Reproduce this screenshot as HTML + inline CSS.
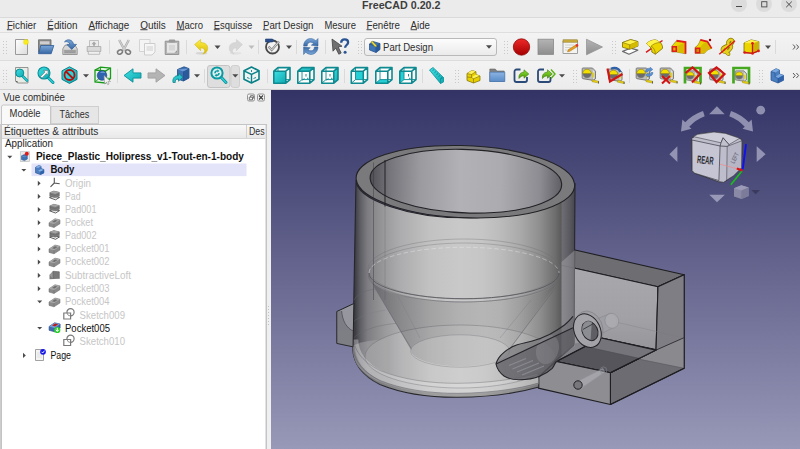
<!DOCTYPE html>
<html><head><meta charset="utf-8"><title>FreeCAD 0.20.2</title>
<style>
*{margin:0;padding:0}
html,body{width:800px;height:449px;overflow:hidden;background:#efefef}
svg{display:block;position:absolute;left:0;top:0}
text{font-family:"Liberation Sans",sans-serif;}
</style></head><body>
<svg width="800" height="449" viewBox="0 0 800 449">
<defs>
<linearGradient id="bgv" x1="0" y1="0" x2="0" y2="1"><stop offset="0" stop-color="#333366"/><stop offset="1" stop-color="#9898b8"/></linearGradient>
<linearGradient id="tbg" x1="0" y1="0" x2="0" y2="1"><stop offset="0" stop-color="#f3f3f3"/><stop offset="1" stop-color="#ececec"/></linearGradient>
<linearGradient id="hdr" x1="0" y1="0" x2="0" y2="1"><stop offset="0" stop-color="#f8f8f8"/><stop offset="1" stop-color="#e8e8e8"/></linearGradient>
<linearGradient id="combo" x1="0" y1="0" x2="0" y2="1"><stop offset="0" stop-color="#fdfdfd"/><stop offset="1" stop-color="#eaeaea"/></linearGradient>
<g id="grip" fill="#c9c9c9"><rect x="0" y="0" width="1" height="1"/><rect x="3" y="0" width="1" height="1"/><rect x="0" y="3" width="1" height="1"/><rect x="3" y="3" width="1" height="1"/><rect x="0" y="6" width="1" height="1"/><rect x="3" y="6" width="1" height="1"/><rect x="0" y="9" width="1" height="1"/><rect x="3" y="9" width="1" height="1"/><rect x="0" y="12" width="1" height="1"/><rect x="3" y="12" width="1" height="1"/></g>
<path id="dd" d="M0 0h6l-3 3.4z" fill="#4a4a4a"/>
</defs>
<!-- title bar -->
<rect x="0" y="0" width="800" height="17" fill="#ebebeb"/>
<rect x="0" y="17" width="800" height="1" fill="#dadada"/>
<text x="362" y="8.7" font-size="10.5" font-weight="bold" fill="#3d3d3d" textLength="78.5" lengthAdjust="spacingAndGlyphs">FreeCAD 0.20.2</text>
<circle cx="739" cy="4" r="8" fill="#dcdcdc"/><circle cx="764" cy="4" r="8" fill="#dcdcdc"/><circle cx="789" cy="4" r="8" fill="#dcdcdc"/>
<rect x="736" y="6" width="6" height="1" fill="#4a4a4a"/>
<rect x="761.7" y="1.7" width="5.2" height="5.2" fill="none" stroke="#4a4a4a" stroke-width="0.9"/>
<path d="M786.2 1.6l5.6 5.6M791.8 1.6l-5.6 5.6" stroke="#4a4a4a" stroke-width="1" fill="none"/>
<!-- menubar -->
<rect x="0" y="18" width="800" height="14" fill="#f1f1f1"/>
<rect x="0" y="32" width="800" height="1" fill="#dedede"/>
<g font-size="10.400" fill="#2e2e2e">
<text x="6.9" y="28.5" textLength="29.4" lengthAdjust="spacingAndGlyphs">Fichier</text>
<text x="47.3" y="28.5" textLength="30.2" lengthAdjust="spacingAndGlyphs">Édition</text>
<text x="88.5" y="28.5" textLength="40.8" lengthAdjust="spacingAndGlyphs">Affichage</text>
<text x="140.3" y="28.5" textLength="25.5" lengthAdjust="spacingAndGlyphs">Outils</text>
<text x="176.5" y="28.5" textLength="26.5" lengthAdjust="spacingAndGlyphs">Macro</text>
<text x="213.8" y="28.5" textLength="38.4" lengthAdjust="spacingAndGlyphs">Esquisse</text>
<text x="263" y="28.5" textLength="50.4" lengthAdjust="spacingAndGlyphs">Part Design</text>
<text x="324.5" y="28.5" textLength="31.5" lengthAdjust="spacingAndGlyphs">Mesure</text>
<text x="366.5" y="28.5" textLength="33.5" lengthAdjust="spacingAndGlyphs">Fenêtre</text>
<text x="410.6" y="28.5" textLength="19.4" lengthAdjust="spacingAndGlyphs">Aide</text>
</g>
<g fill="#2e2e2e"><rect x="6.9" y="29.300" width="5.4" height="0.900"/><rect x="47.3" y="29.300" width="5.8" height="0.900"/><rect x="88.5" y="29.300" width="6.4" height="0.900"/><rect x="140.3" y="29.300" width="7.2" height="0.900"/><rect x="176.5" y="29.300" width="8" height="0.900"/><rect x="213.8" y="29.300" width="5.8" height="0.900"/><rect x="263" y="29.300" width="5.6" height="0.900"/><rect x="366.5" y="29.300" width="5.4" height="0.900"/><rect x="410.6" y="29.300" width="6.4" height="0.900"/></g>
<!-- toolbars -->
<rect x="0" y="33" width="800" height="28" fill="url(#tbg)"/>
<rect x="0" y="60" width="800" height="1" fill="#dcdcdc"/>
<rect x="0" y="61" width="800" height="28" fill="url(#tbg)"/>
<rect x="0" y="89" width="800" height="1" fill="#d0d0d0"/>
<!-- grips tb1 -->
<use href="#grip" x="3" y="41"/><use href="#grip" x="358" y="41"/><use href="#grip" x="504" y="41"/><use href="#grip" x="612" y="41"/>
<!-- grips tb2 -->
<use href="#grip" x="3" y="70"/><use href="#grip" x="455" y="70"/><use href="#grip" x="573" y="70"/><use href="#grip" x="759" y="70"/>
<!-- separators tb1 -->
<g fill="#dadada"><rect x="109" y="40" width="1" height="14"/><rect x="186" y="40" width="1" height="14"/><rect x="258" y="40" width="1" height="14"/><rect x="296" y="40" width="1" height="14"/><rect x="325" y="40" width="1" height="14"/><rect x="775" y="40" width="1" height="14"/>
<rect x="117" y="69" width="1" height="14"/><rect x="204" y="69" width="1" height="14"/><rect x="267" y="69" width="1" height="14"/><rect x="344" y="69" width="1" height="14"/><rect x="422" y="69" width="1" height="14"/><rect x="629" y="69" width="1" height="14"/></g>
<!-- drop arrows -->
<use href="#dd" x="214.5" y="45.5"/><use href="#dd" x="248.5" y="45.5" opacity="0.3"/><use href="#dd" x="286" y="45.5"/><use href="#dd" x="765" y="45.5"/>
<use href="#dd" x="83" y="74.2"/><use href="#dd" x="194" y="74.2"/><use href="#dd" x="559" y="74.2"/>
<!-- chevrons -->
<path d="M793 44.5l2.2 2.5-2.2 2.5M796.4 44.5l2.2 2.5-2.2 2.5" fill="none" stroke="#555" stroke-width="1"/>
<path d="M793 73l2.2 2.5-2.2 2.5M796.4 73l2.2 2.5-2.2 2.5" fill="none" stroke="#555" stroke-width="1"/>
<!-- combobox -->
<rect x="364.5" y="38.5" width="132" height="17" rx="2.5" fill="url(#combo)" stroke="#b9b9b9"/>
<text x="383" y="50.6" font-size="10.400" fill="#2e2e2e" textLength="50" lengthAdjust="spacingAndGlyphs">Part Design</text>
<use href="#dd" x="486" y="45.3"/>
<!-- pressed button -->
<rect x="207.5" y="65.5" width="22.5" height="22" rx="2.5" fill="#dedede" stroke="#c4c4c4"/>
<rect x="231" y="65.5" width="8.5" height="22" rx="2.5" fill="#dedede" stroke="#cfcfcf"/>
<use href="#dd" x="232.3" y="74.2"/>
<!-- ===== toolbar 1 icons ===== -->
<defs>
<linearGradient id="gPage" x1="0" y1="0" x2="1" y2="1"><stop offset="0" stop-color="#ffffff"/><stop offset="1" stop-color="#dcdcdc"/></linearGradient>
<linearGradient id="gBlue" x1="0" y1="0" x2="0" y2="1"><stop offset="0" stop-color="#7aa6d8"/><stop offset="1" stop-color="#3768a5"/></linearGradient>
<linearGradient id="gYel" x1="0" y1="0" x2="0" y2="1"><stop offset="0" stop-color="#fff04a"/><stop offset="1" stop-color="#d8b800"/></linearGradient>
<linearGradient id="gRed" x1="0" y1="0" x2="0" y2="1"><stop offset="0" stop-color="#ef2929"/><stop offset="1" stop-color="#a40000"/></linearGradient>
<linearGradient id="gGray" x1="0" y1="0" x2="0" y2="1"><stop offset="0" stop-color="#b4b4b4"/><stop offset="1" stop-color="#8e8e8e"/></linearGradient>
<radialGradient id="gStar"><stop offset="0" stop-color="#ffffc0"/><stop offset="0.5" stop-color="#f4e400"/><stop offset="1" stop-color="#f4e400" stop-opacity="0"/></radialGradient>
</defs>
<!-- new -->
<g transform="translate(14,39)">
<path d="M1.5 0.5h12v15h-12z" fill="url(#gPage)" stroke="#9a9a9a"/>
<circle cx="12" cy="3" r="3.6" fill="url(#gStar)"/><circle cx="12" cy="3" r="1.7" fill="#f6ec20"/>
</g>
<!-- open -->
<g transform="translate(37,39)">
<path d="M1.500 0.800h12.500v12.500h-12.500z" fill="#8e8e8e" stroke="#686868" stroke-width=".8"/>
<path d="M3 2.300h9.500v3h-9.500z" fill="#cfcfcf"/>
<path d="M3.800 6.500h13l-2.600 8.200h-12.700z" fill="url(#gBlue)" stroke="#2f5c96" stroke-width=".8"/>
</g>
<!-- save -->
<g transform="translate(62,39)">
<path d="M0.800 9.800l2.200-3.600h10l2.200 3.600v5.700h-14.400z" fill="#d6d6d6" stroke="#858585" stroke-width=".8"/>
<rect x="1.800" y="10.800" width="12.400" height="3.800" fill="#a6a6a6"/><path d="M3 12h10M3 13.400h10" stroke="#8c8c8c" stroke-width=".5"/>
<path d="M2.500 2.800c3-3.600 8.600-2 9 2.600h3l-4.800 5-4.800-5h2.900c-.3-2-2.500-3.300-5.300-2.600z" fill="url(#gBlue)" stroke="#2f5c96" stroke-width=".7"/>
</g>
<!-- save-as / print (disabled) -->
<g transform="translate(86,39)">
<path d="M3.500 1.500h9v6h-9z" fill="#ececec" stroke="#b4b4b4" stroke-width=".8"/>
<path d="M8 2.600l2.600 2.600h-1.600v1.600h-2v-1.600h-1.600z" fill="#a8a8a8"/>
<path d="M1.200 7.500h13.600v5h-13.600z" fill="#dadada" stroke="#a6a6a6" stroke-width=".8"/>
<path d="M2.300 12.300h11.400v3h-11.400z" fill="#f0f0f0" stroke="#b0b0b0" stroke-width=".8"/>
</g>
<!-- cut -->
<g transform="translate(116,39)" fill="none" stroke="#8b8b8b">
<path d="M3.2 1l5.6 10.5M12.8 1l-5.6 10.500" stroke-width="2.200" stroke="#9e9e9e"/>
<path d="M3.2 1l5.6 10.5M12.8 1l-5.6 10.5" stroke-width="1.300" stroke="#d0d0d0"/>
<ellipse cx="4" cy="13" rx="2.6" ry="2" transform="rotate(-30 4 13)" stroke-width="1.5" stroke="#7d7d7d"/>
<ellipse cx="12" cy="13" rx="2.6" ry="2" transform="rotate(30 12 13)" stroke-width="1.5" stroke="#7d7d7d"/>
</g>
<!-- copy (disabled) -->
<g transform="translate(139,39)">
<path d="M0.500.5h10.500v12h-10.500z" fill="#f4f4f4" stroke="#d4d4d4"/>
<path d="M5.500 4.500h10.500v8.500l-3 3h-7.500z" fill="#f6f6f6" stroke="#cdcdcd"/>
<rect x="7.500" y="7" width="6.500" height="5" fill="#e2e2e2"/>
</g>
<!-- paste -->
<g transform="translate(164,39)">
<path d="M1.200 2.200h13.600v13.300h-13.600z" fill="#b4b4b4" stroke="#8e8e8e" stroke-width=".9"/>
<path d="M3 4h10v9.800h-10z" fill="#e6e6e6"/>
<rect x="4.800" y="0.600" width="6.400" height="3" rx="1" fill="#9a9a9a"/>
<rect x="5" y="6" width="6" height="5.500" fill="#d6d6d6"/>
<path d="M10.500 13.800l2.500-2.500v2.500z" fill="#9a9a9a"/>
</g>
<!-- undo -->
<g transform="translate(194,39)">
<ellipse cx="7.500" cy="14.300" rx="6" ry="1.400" fill="#000" opacity="0.100"/>
<path d="M0.600 5.500l6-5v3c5.500 0 8 3.500 6.800 7.500-0.700 2.200-2.600 3.600-4.600 4 1.800-1.500 2.200-3 1.600-4.300-0.700-1.400-2-1.800-3.800-1.800v2.800z" fill="url(#gYel)" stroke="#d4bc10" stroke-width=".6"/>
</g>
<!-- redo (disabled) -->
<g transform="translate(228,39)" opacity="0.900">
<ellipse cx="7.500" cy="14.300" rx="6" ry="1.400" fill="#000" opacity="0.050"/>
<path d="M14.400 5.500l-6-5v3c-5.500 0-8 3.500-6.800 7.500 0.700 2.200 2.600 3.600 4.600 4-1.800-1.500-2.200-3-1.600-4.300 0.700-1.400 2-1.800 3.800-1.800v2.800z" fill="#d4d4d4" stroke="#cbcbcb" stroke-width=".6"/>
</g>
<!-- macro check -->
<g transform="translate(264,38)">
<circle cx="8.500" cy="9" r="6.500" fill="#f2f2f2" stroke="#4a4a4a" stroke-width="1.800"/>
<path d="M4.500 8.500l3.200 3.500l7.300-8.500" fill="none" stroke="#8a8a8a" stroke-width="2.400"/>
<path d="M4.500 8.500l3.200 3.500l7.300-8.500" fill="none" stroke="#d9d9d9" stroke-width="1"/>
<path d="M1.500 1h7l1.500 1.500-1.500 1.500h-7z" fill="#2b4f8f" stroke="#1d3a70" stroke-width=".6"/>
</g>
<!-- refresh -->
<g transform="translate(303,39)">
<path id="rfA" d="M0.600 7C0.600 2.500 4-.5 7.500-.5C9.500-.5 11.500 .5 12.800 1.800L15-.5V7L8.300 6.200L10.600 4.400C9.800 3.600 8.800 3.200 7.500 3.200C5.500 3.200 4.200 4.800 4.200 7Z" fill="url(#gBlue)" stroke="#2f5c96" stroke-width=".5" stroke-linejoin="round"/>
<use href="#rfA" transform="rotate(180 7.800 7.500)"/>
</g>
<!-- whats this -->
<g transform="translate(331,38)">
<path d="M1 1l10 7.200-3.800 .8 3 6-2.400 1.200-3-6-2.800 3z" fill="#707070" stroke="#444" stroke-width=".8" stroke-linejoin="round"/>
<path d="M10.200 4.800c0-2.200 1.500-3.400 3.500-3.400s3.400 1.200 3.400 3c0 2.600-3 2.600-3 5.300" fill="none" stroke="#2a5592" stroke-width="2.300"/>
<circle cx="14.100" cy="14.300" r="1.500" fill="#2a5592"/>
</g>
<!-- combobox icon -->
<g transform="translate(369,41)">
<path d="M0.500 3l3.500-2.500 7 2v6l-4 3-6.500-2.500z" fill="#3d72b4" stroke="#1f4a87" stroke-width=".7"/>
<path d="M0.500 3l6.500 2.300v6.200M7 5.300l4-2.800" fill="none" stroke="#1f4a87" stroke-width=".7"/>
<path d="M7 5.300l4-2.800v6l-4 3z" fill="#2a5a9c"/>
<path d="M1.800 1l1.500-1 4.200 4.400-.2 1.600-1.500-.4z" fill="#f0dc3a" stroke="#8a7a10" stroke-width=".5"/>
</g>
<!-- record -->
<circle cx="521.500" cy="47" r="8.200" fill="url(#gRed)" stroke="#8f0a0a" stroke-width=".8"/>
<!-- stop -->
<rect x="538" y="39.200" width="15.600" height="15.200" fill="url(#gGray)" stroke="#8a8a8a" stroke-width=".8"/>
<!-- notepad -->
<g transform="translate(562,39)">
<path d="M1 2h14.500v12.500h-14.500z" fill="#f3f3f0" stroke="#9f9f9f"/>
<rect x="1" y="0.800" width="14.500" height="2.400" fill="#c8aa3a" stroke="#8c7420" stroke-width=".5"/>
<path d="M3 6h9M3 8.500h6M3 11h4" stroke="#c9c9c9" stroke-width=".8"/>
<path d="M5.500 12.800l1-2.200 7.500-4.800 1.400 1.800-7.600 4.700z" fill="#e8a020" stroke="#a8680c" stroke-width=".5"/>
<circle cx="15" cy="6.400" r="1.300" fill="#e03030"/>
</g>
<!-- play -->
<path d="M586.500 39.200v15.600l16-7.800z" fill="url(#gGray)" stroke="#8f8f8f" stroke-width=".7"/>
<!-- pad -->
<g transform="translate(622,38)">
<path d="M0.600 13.400l7.800-3.200 7.400 2-8.800 4z" fill="#fdfdfd" stroke="#6a6a6a" stroke-width="1.200" stroke-linejoin="round"/>
<path d="M0.500 4.500l8.100-2.900 7.400 2v4.500l-8.300 3.200-7.200-2z" fill="#e8d000" stroke="#6a5c00" stroke-width=".7" stroke-linejoin="round"/>
<path d="M0.500 4.500l8.100-2.900 7.400 2-8.300 3.200z" fill="#fff24a" stroke="#6a5c00" stroke-width=".5"/>
<path d="M7.700 6.800v4.500l8.300-3.200v-4.500z" fill="#d4ba00"/>
<path d="M7.700 6.800v4.500" stroke="#6a5c00" stroke-width=".5"/>
</g>
<!-- revolution -->
<g transform="translate(645,38)">
<path d="M1 14.450L17.500 2.500" stroke="#d81818" stroke-width="1.500"/>
<path d="M1.600 5.450C4 3 7.500 1.800 10.800 1.850L15.300 4.550C17 6 17.800 8.500 17.500 10.400L10.350 16.250 6.750 14C7.200 11.500 6 9.200 4 8.150Z" fill="#ecd400" stroke="#6a5c00" stroke-width=".7" stroke-linejoin="round"/>
<path d="M1.600 5.450C4 3 7.500 1.800 10.800 1.850L15.300 4.550C11.500 4.500 8.500 5.800 6 8.200L4 8.150Z" fill="#fff24a"/>
<path d="M6 8.200C8.500 5.800 11.500 4.500 15.300 4.550M6 8.200C8.800 9.500 10.400 12.500 10.350 16.250" fill="none" stroke="#6a5c00" stroke-width=".5"/>
</g>
<!-- loft -->
<g transform="translate(671,38)">
<path d="M0.800 8.150L5.500 2.750 14.500 4.100V15.800L5.300 14H0.800Z" fill="#ecd400" stroke="#6a5c00" stroke-width=".5"/>
<path d="M5.300 8.150L14 4.500V15.300L5.300 14Z" fill="#d8bc00"/>
<path d="M5.500 2.750L14.500 4.100V15.800" fill="none" stroke="#e01c1c" stroke-width="1.800" stroke-linejoin="miter"/>
<path d="M1.500 8.850h3.800v4.500h-3.800z" fill="#e8a800" stroke="#e01c1c" stroke-width="1.500"/>
</g>
<!-- sweep -->
<g transform="translate(694,37)">
<path d="M1 10.500C3.600 9 5.400 6.500 6.350 2.850L13.500 4.650 17.600 11.400C14.500 12 12 13.800 10.400 16.350H1Z" fill="#ecd400" stroke="#6a5c00" stroke-width=".5"/>
<path d="M6.350 10.500C7.500 7.500 10 5.500 13.500 4.650L17.600 11.400C14.500 12 12 13.800 10.400 16.350H6.350Z" fill="#d8bc00"/>
<path d="M6.350 2.850L13.500 4.650 17.600 11.400" fill="none" stroke="#e01c1c" stroke-width="1.700" stroke-linejoin="round"/>
<path d="M1.700 11.200h4v4.500h-4z" fill="#c89000" stroke="#e01c1c" stroke-width="1.500"/>
<path d="M8.500 13.500c2-.3 4-1.500 5.500-3.500" fill="none" stroke="#e8a040" stroke-width=".9" opacity=".8"/>
<circle cx="16" cy="3.100" r="1.250" fill="#8a0808"/>
</g>
<!-- helix -->
<g transform="translate(719,38)">
<g fill="none" stroke-linecap="round">
<path d="M9 5.500C9 2.500 11.500 1 13 2.200 14.500 3.500 13 6 10.500 7 7 8.300 3 9 3.500 12 4 14.500 8 14.500 10 12.500 12 10.500 13.500 8 11 7.500 8.500 7.200 6 10 7.500 13.500 8 15 9 16 9.500 16" stroke="#8a7a00" stroke-width="3.800"/>
<path d="M9 5.500C9 2.500 11.500 1 13 2.200 14.500 3.500 13 6 10.500 7 7 8.300 3 9 3.500 12 4 14.500 8 14.500 10 12.500 12 10.500 13.500 8 11 7.500 8.500 7.200 6 10 7.500 13.500 8 15 9 16 9.500 16" stroke="#e4d020" stroke-width="2.400"/>
</g>
<path d="M0.250 16.250L16 2.750" stroke="#dc1818" stroke-width="1.400"/>
</g>
<!-- additive box -->
<g transform="translate(743,38)">
<path d="M1 5L8.200 1.850 15.850 3.650V13.100L9.500 15.350 1 14.500Z" fill="#ecd400" stroke="#6a5c00" stroke-width=".7" stroke-linejoin="round"/>
<path d="M1 5L8.200 1.850 15.850 3.650 9.500 5.200Z" fill="#fff24a"/>
<path d="M9.500 5.200L15.850 3.650V13.100L9.500 15.350Z" fill="#cdb400"/>
<path d="M9.500 5.200V15.350M1.500 14.500L9.500 15.350 15.500 12.900" fill="none" stroke="#cc1616" stroke-width="1.300"/>
<circle cx="9.500" cy="5.200" r="1.300" fill="#dc1818"/><circle cx="1.600" cy="14.500" r="1.300" fill="#dc1818"/><circle cx="9.500" cy="15.500" r="1.300" fill="#dc1818"/><circle cx="15.500" cy="12.900" r="1.300" fill="#dc1818"/>
</g>
<!-- ===== toolbar 2 icons ===== -->
<defs>
<linearGradient id="gCy" x1="0" y1="0" x2="1" y2="1"><stop offset="0" stop-color="#3fe0e4"/><stop offset="1" stop-color="#0fa8b0"/></linearGradient>
<linearGradient id="gFold" x1="0" y1="0" x2="0" y2="1"><stop offset="0" stop-color="#8cb4e2"/><stop offset="1" stop-color="#5a8cc8"/></linearGradient>
<linearGradient id="gGrn" x1="0" y1="0" x2="0" y2="1"><stop offset="0" stop-color="#8ae234"/><stop offset="1" stop-color="#4e9a06"/></linearGradient>
<!-- wireframe cube 17x17 -->
<path id="wbg" d="M0.800 5.200l4.200-3.600h12v12l-4.200 3.600h-12z" fill="#ffffff"/>
<path id="whid" d="M5 1.800v11.800l-4.200 3.600M5 13.600h12" stroke-width="1" stroke="#1a969c" fill="none"/>
<path id="wcube" d="M0.800 5.200h12v12h-12zM0.800 5.200l4.200-3.600h12l-4.200 3.600M17 1.600v12l-4.200 3.600" stroke-width="1.600" fill="none" stroke="#0e8a90" stroke-linejoin="round"/>
<path id="wmarks" d="M7.500 12.500l-2.200 1.600M9 8v2.500M11.500 12.300h-1.600" stroke="#0e7a80" stroke-width=".9" fill="none"/>
<!-- measure tape body -->
<g id="tape">
<path d="M1 1h9.500l3 3.200v7.600l-2.200 1.600-10.300-1.700q-.8-.2-.8-1v-8.900q0-.8.800-.8z" fill="#bdbdbd" stroke="#707070" stroke-width=".9" stroke-linejoin="round"/>
<path d="M10.200 1.600l2.800 3v7l-2.300 1.400z" fill="#e2e2e2" stroke="#8a8a8a" stroke-width=".4"/>
<circle cx="5" cy="6.600" r="4.300" fill="#6c6c6c" stroke="#8e8e8e" stroke-width=".5"/>
<path d="M0.700 6.600a4.300 4.300 0 0 1 8.600 0z" fill="#f2e000" stroke="#8a7a00" stroke-width=".4"/>
<path d="M10.700 5.600h1.500v4.800h-1.500z" fill="#e8d400"/>
</g>
<g id="tapeEnd"><path d="M10 12.800l6.600 1.400v1.900l-6.600-1.400z" fill="#e8d010" stroke="#8a7a00" stroke-width=".4"/><path d="M16.200 14.200l.8 .1v2.300l-.8-.2z" fill="#4a4a4a"/></g>
</defs>
<!-- fit all -->
<g transform="translate(14,67)">
<path d="M1.500 0.500h12.500v15.500h-10.500l-2-2z" fill="#e9ece4" stroke="#8a8a8a" stroke-width=".9"/>
<path d="M1.500 14l2 2v-2z" fill="#555"/>
<path d="M7.500 8l5.500 5.500" stroke="#0a8f98" stroke-width="2.600" stroke-linecap="round"/>
<path d="M7.500 8l5.500 5.500" stroke="#28d0d6" stroke-width="1.200" stroke-linecap="round"/>
<circle cx="5.800" cy="6" r="4" fill="url(#gCy)" stroke="#0a8f98" stroke-width="1"/>
</g>
<!-- fit selection -->
<g transform="translate(37,66)">
<path d="M10 10.500l6 6" stroke="#0a8f98" stroke-width="3" stroke-linecap="round"/>
<path d="M10 10.500l6 6" stroke="#28d0d6" stroke-width="1.400" stroke-linecap="round"/>
<circle cx="7" cy="7" r="6" fill="url(#gCy)" stroke="#0a8f98" stroke-width="1.100"/>
<path d="M3.500 10.500l4.500-4.500-1.500-1.500h4.500v4.500l-1.500-1.500-4.500 4.500z" fill="#f4f4f4" stroke="#5a6a6a" stroke-width=".5"/>
</g>
<!-- draw style -->
<g transform="translate(61,66)">
<path d="M8.500 0.800l7.500 4v8.600l-7.500 4-7.500-4v-8.600z" fill="url(#gCy)" stroke="#0a8088" stroke-width="1"/>
<circle cx="8.500" cy="9" r="5" fill="#2cd4da" stroke="#b01010" stroke-width="1.800"/>
<path d="M5 5.500l7 7" stroke="#b01010" stroke-width="1.800"/>
</g>
<!-- bounding box select -->
<g transform="translate(94,66)">
<path d="M1 4l5.500-2.800 10 .8v10.500l-5 4.500-10.500-1z" fill="#e8f4e8" stroke="#1a9a1a" stroke-width="1.300"/>
<path d="M1 4l10.500 1 5-3M11.500 5v12" fill="none" stroke="#1a9a1a" stroke-width="1.300"/>
<path d="M6.500 1.200v10l-5.500 4.800M6.500 11.200l10 1.300" fill="none" stroke="#1a9a1a" stroke-width=".9"/>
<circle cx="8" cy="9.500" r="4.800" fill="#2f63b0" stroke="#1c417e" stroke-width=".6"/>
<path d="M6 6.500c2-1.600 4.500-1 5.500 .5-2-.6-4 0-5.500-.5z" fill="#7aa6e0"/>
<path d="M10 9.500l6.500 6-2.600 .2 1.200 2.300-1.400 .7-1.200-2.400-1.900 1.700z" fill="#f4f4f4" stroke="#8a8a8a" stroke-width=".6"/>
</g>
<!-- back -->
<path d="M124 75.500l9-6.700v4.100h8v5.200h-8v4.100z" fill="url(#gCy)" stroke="#0a8f98" stroke-width=".9"/>
<!-- forward -->
<path d="M165 75.500l-9-6.700v4.100h-8v5.200h8v4.100z" fill="#b4b4b4" stroke="#a0a0a0" stroke-width=".9"/>
<!-- link go -->
<g transform="translate(172,66)">
<path d="M5.500 3.500l6.500-2.700 5 1.800v9.400l-5.500 3-6-2z" fill="#3d72b4" stroke="#1f4a87" stroke-width=".8"/>
<path d="M5.500 3.500l6 2 5.500-2.900z" fill="#6c9ad4"/>
<path d="M11.500 5.500v9.500" stroke="#1f4a87" stroke-width=".8"/>
<path d="M11.500 5.500l5.500-2.900v9.400l-5.500 3z" fill="#2a5a9c"/>
<path d="M1 16.500c-.8-4 1.600-7 5.500-7v-2.300l4.300 4-4.300 4v-2.300c-2.300 0-3.700 1.300-3.200 3.600z" fill="#28c4cc" stroke="#0a7a82" stroke-width=".7"/>
</g>
<!-- sync view (pressed) -->
<g transform="translate(210,66)">
<path d="M10.500 10.500l5.500 6" stroke="#0a8f98" stroke-width="3" stroke-linecap="round"/>
<path d="M10.500 10.500l5.500 6" stroke="#28d0d6" stroke-width="1.400" stroke-linecap="round"/>
<circle cx="7" cy="7" r="5.600" fill="#dff0f0" stroke="#0a9aa2" stroke-width="2"/>
<path d="M4.200 7.200c0-2 1.500-3.200 3.200-3l0-.9 2 1.600-2 1.600v-.9c-.9 0-1.600.6-1.600 1.600zM9.800 7c0 2-1.500 3.200-3.200 3l0 .9-2-1.600 2-1.600v.9c.9 0 1.600-.6 1.600-1.600z" fill="#0a9aa2"/>
</g>
<!-- iso -->
<g transform="translate(243,66)">
<path d="M8.500 1l7.500 3.800v8.400l-7.500 3.800-7.500-3.800v-8.400z" fill="#eef4f4" stroke="#0a8088" stroke-width="1.600" stroke-linejoin="round"/>
<path d="M1 4.800l7.500 3.700 7.500-3.700M8.500 8.500v8.500" fill="none" stroke="#0a8088" stroke-width="1.400"/>
<path d="M4 11.500l2.500 1M13 11.500l-2.500 1M8.500 4v2" stroke="#0a8088" stroke-width=".9"/>
</g>
<!-- front -->
<g transform="translate(273,66)"><use href="#wbg"/><use href="#whid"/><path d="M0.800 5.200h12v12h-12z" fill="url(#gCy)"/><use href="#wcube"/></g>
<!-- top -->
<g transform="translate(297,66)"><use href="#wbg"/><use href="#whid"/><path d="M0.800 5.200l4.200-3.600h12l-4.200 3.600z" fill="url(#gCy)"/><use href="#wcube"/><use href="#wmarks"/></g>
<!-- right -->
<g transform="translate(321,66)"><use href="#wbg"/><use href="#whid"/><path d="M12.800 5.200l4.200-3.600v12l-4.200 3.600z" fill="url(#gCy)"/><use href="#wcube"/><use href="#wmarks"/></g>
<!-- rear -->
<g transform="translate(350.500,66)"><use href="#wbg"/><path d="M5 5.200h7.800v8.400h-7.800z" fill="#24d0d6"/><use href="#whid"/><use href="#wcube"/></g>
<!-- bottom -->
<g transform="translate(375,66)"><use href="#wbg"/><path d="M0.800 17.200l4.200-3.600h7.800v3.600z" fill="#24d0d6"/><use href="#whid"/><use href="#wcube"/></g>
<!-- left -->
<g transform="translate(399,66)"><use href="#wbg"/><path d="M0.800 5.200h4.200v8.400l-4.200 3.600z" fill="#24d0d6"/><use href="#whid"/><use href="#wcube"/><path d="M9.500 8v2.500M11.500 12.300h-1.600" stroke="#0e7a80" stroke-width=".9" fill="none"/></g>
<!-- ruler -->
<g transform="translate(428.500,67)">
<path d="M1 3l3.500-2.500 10.500 10v4.500l-3 1.500z" fill="url(#gCy)" stroke="#0a8f98" stroke-width=".8"/>
<path d="M12 16.500v-4.500l3-1.500" fill="none" stroke="#0a8f98" stroke-width=".7"/>
<path d="M4 3.500l1.500-1M6 5.500l1.500-1M8 7.500l1.500-1M10 9.500l1.500-1M12 11.500l1.500-1" stroke="#0a6a72" stroke-width=".6"/>
</g>
<!-- part (std part yellow) -->
<g transform="translate(466,68)">
<path d="M1 5.500l5-3 4 1.200v2.800l4 1.500v4.500l-6.500 2.500-6.500-2.500z" fill="#e8d000" stroke="#7a6a00" stroke-width=".7"/>
<path d="M1 5.500l5-3 4 1.200-4.500 2.800zM5.500 9.500l4.500-3 4 1.500-6.500 3z" fill="#fff25a"/>
<path d="M1 5.500l4.500 1v3l2 1.200v4.300M5.500 6.500l4.500-2.800M7.500 10.800l6.500-2.800M1 9l4.500 .5" fill="none" stroke="#7a6a00" stroke-width=".6"/>
</g>
<!-- group folder -->
<g transform="translate(489,68)">
<path d="M0.800 1h5.500l1.500 2h7.400v10.500h-14.400z" fill="#808080" stroke="#666" stroke-width=".6"/>
<path d="M0.800 4.200h15v9.300h-15z" fill="url(#gFold)" stroke="#4a78b4" stroke-width=".7"/>
</g>
<!-- link make -->
<g transform="translate(513.500,68)">
<path d="M7 1.500h-4a2 2 0 0 0-2 2v8.500a2 2 0 0 0 2 2h8.500a2 2 0 0 0 2-2v-3" fill="none" stroke="#2b4a78" stroke-width="1.800"/>
<path d="M5.500 10.500c-.5-4 1.600-6.300 5-6.300v-2.400l4.800 4.200-4.800 4.200v-2.400c-2.200 0-3.400 .8-5 2.700z" fill="url(#gGrn)" stroke="#3a7a06" stroke-width=".6"/>
</g>
<!-- link make relative -->
<g transform="translate(537,68)">
<path d="M7 1.500h-4a2 2 0 0 0-2 2v8.500a2 2 0 0 0 2 2h8.500a2 2 0 0 0 2-2v-3" fill="none" stroke="#2b4a78" stroke-width="1.800"/>
<path d="M5.500 10.500c-.5-4 1.600-6.300 5-6.300v-2.400l4.800 4.200-4.800 4.200v-2.400c-2.200 0-3.400 .8-5 2.700z" fill="url(#gGrn)" stroke="#3a7a06" stroke-width=".6"/>
<path d="M14 1.500l4 4.500-4 4.500" fill="none" stroke="#5ab010" stroke-width="1.400"/>
</g>
<!-- measure linear -->
<g transform="translate(582,67)"><use href="#tape"/><use href="#tapeEnd"/></g>
<!-- measure angular -->
<g transform="translate(606,67)"><use href="#tape" transform="translate(2.500,1)"/><use href="#tapeEnd" transform="translate(1.500,.5)"/>
<path d="M5 1.800c3.500-2 8-.8 9.500 3.200" fill="none" stroke="#2f62a8" stroke-width="2.200"/>
<path d="M1.500 1.500l2.500 13 12.500-7.500" fill="none" stroke="#d01414" stroke-width="2.200"/>
</g>
<!-- measure refresh -->
<g transform="translate(636,67)"><use href="#tape"/><use href="#tapeEnd"/>
<path d="M9.500 5c0-2.600 2.300-4.200 4.700-3.700v-1.100l2.600 2.200-2.600 2.200v-1.200c-1.400-.2-2.500 .6-2.500 1.600zM17 5.500c0 2.600-2.300 4.200-4.700 3.700v1.100l-2.600-2.200 2.600-2.200v1.200c1.400 .2 2.500-.6 2.500-1.600z" fill="#5a92d6" stroke="#2a5a9c" stroke-width=".4"/>
</g>
<!-- measure clear -->
<g transform="translate(660,67)"><use href="#tape"/><use href="#tapeEnd" transform="translate(.5,0)"/>
<path d="M2 9l8 7.500M10 9l-8 7.500" stroke="#d01414" stroke-width="2.100"/>
</g>
<!-- toggle all -->
<g transform="translate(684,67)"><path d="M1 16.500v-15.500h15.500v15.500" fill="none" stroke="#46a81e" stroke-width="2.700"/><use href="#tape" transform="translate(2,3) scale(.85)"/><use href="#tapeEnd" transform="translate(0,1)"/>
<path d="M1.500 6l7-5.500 7.500 6.500-8 8.500" fill="none" stroke="#d01414" stroke-width="2.200"/>
</g>
<!-- toggle 3d -->
<g transform="translate(708.500,67)"><use href="#tape" transform="translate(1,1)"/><use href="#tapeEnd" transform="translate(0,.5)"/>
<path d="M0.500 6l7.500-5.500 8 6.500-8 8z" fill="none" stroke="#d01414" stroke-width="2.200"/>
</g>
<!-- toggle delta -->
<g transform="translate(732.500,67)"><path d="M1 16.500v-15.500h15.500v15.500" fill="none" stroke="#46a81e" stroke-width="2.700"/><use href="#tape" transform="translate(2.500,3) scale(.85)"/><use href="#tapeEnd" transform="translate(0,1)"/>
</g>
<!-- body icon -->
<g transform="translate(770,67.500)">
<path d="M1 4l5-2.800 3.500 1.300v4l4 1.300v5l-5.500 2.700-7-2.800z" fill="#4a7ec0" stroke="#24508e" stroke-width=".7"/>
<path d="M1 4l5-2.800 3.500 1.300-4.500 2.800zM5 9.500l4.500-3 4 1.300-5.500 3z" fill="#7aa8e0"/>
<path d="M8 10.800l5.500-3v5l-5.500 2.700z" fill="#2f62a8"/>
<path d="M1 4l4 1.300v4.200l3 1.300v4.700" fill="none" stroke="#24508e" stroke-width=".6"/>
</g>
<rect x="0" y="90" width="271" height="359" fill="#efefef"/>
<text x="3.2" y="100.6" font-size="10.400" fill="#2e2e2e" textLength="61.8" lengthAdjust="spacingAndGlyphs">Vue combinée</text>
<!-- float/close buttons -->
<rect x="247.5" y="94" width="7" height="7" rx="1.5" fill="#f4f4f4" stroke="#8a8a8a" stroke-width="0.9"/>
<rect x="257.5" y="94" width="7" height="7" rx="1.5" fill="#f4f4f4" stroke="#8a8a8a" stroke-width="0.9"/>
<path d="M249.3 97.2h3.2v2.6h-3.2zM250.6 97v-1.3h2.8v2.6h-0.9" fill="none" stroke="#555" stroke-width="0.8"/>
<path d="M259 95.500l4 4M263 95.500l-4 4" stroke="#3c3c3c" stroke-width="1.100" fill="none"/>
<!-- tabs -->
<rect x="51" y="106.5" width="47.5" height="17" fill="#e6e6e6" stroke="#cfcfcf"/>
<path d="M1.5 124V107a2 2 0 0 1 2-2h45a2 2 0 0 1 2 2v17" fill="#f9f9f9" stroke="#c6c6c6"/>
<text x="9.6" y="117.4" font-size="10.400" fill="#2e2e2e" textLength="31" lengthAdjust="spacingAndGlyphs">Modèle</text>
<text x="59.5" y="118" font-size="10.400" fill="#2e2e2e" textLength="29.8" lengthAdjust="spacingAndGlyphs">Tâches</text>
<!-- tree frame -->
<rect x="0" y="124" width="267" height="325" fill="#c4c4c4"/>
<rect x="2" y="125" width="263" height="324" fill="#ffffff"/>
<rect x="0" y="124" width="1" height="325" fill="#cdcdcd"/>
<rect x="265" y="125" width="1" height="324" fill="#e2e2e2"/>
<!-- header -->
<rect x="2" y="125" width="263" height="13" fill="url(#hdr)"/>
<rect x="2" y="138" width="263" height="1" fill="#d4d4d4"/>
<rect x="246" y="125" width="1" height="13" fill="#d0d0d0"/>
<text x="3.9" y="135" font-size="10.400" fill="#2e2e2e" textLength="94.5" lengthAdjust="spacingAndGlyphs">Étiquettes &amp; attributs</text>
<text x="249" y="135" font-size="10.400" fill="#2e2e2e" textLength="15.6" lengthAdjust="spacingAndGlyphs">Des</text>
<!-- tree rows -->
<rect x="31.5" y="163.5" width="215" height="12.6" fill="#e3e3fa"/>
<g font-size="10.200" fill="#222">
<text x="5" y="147.4" textLength="48" lengthAdjust="spacingAndGlyphs">Application</text>
<text x="35.9" y="160.4" font-weight="bold" fill="#111" textLength="208" lengthAdjust="spacingAndGlyphs">Piece_Plastic_Holipress_v1-Tout-en-1-body</text>
<text x="50.4" y="173.4" font-weight="bold" fill="#111" textLength="24" lengthAdjust="spacingAndGlyphs">Body</text>
<g fill="#c6c6c6">
<text x="65" y="186.5" textLength="26" lengthAdjust="spacingAndGlyphs">Origin</text>
<text x="65" y="199.6" textLength="15.5" lengthAdjust="spacingAndGlyphs">Pad</text>
<text x="65" y="212.8" textLength="31.5" lengthAdjust="spacingAndGlyphs">Pad001</text>
<text x="65" y="225.9" textLength="28" lengthAdjust="spacingAndGlyphs">Pocket</text>
<text x="65" y="239" textLength="31.5" lengthAdjust="spacingAndGlyphs">Pad002</text>
<text x="65" y="252.2" textLength="44.5" lengthAdjust="spacingAndGlyphs">Pocket001</text>
<text x="65" y="265.3" textLength="44.5" lengthAdjust="spacingAndGlyphs">Pocket002</text>
<text x="65" y="278.7" textLength="66" lengthAdjust="spacingAndGlyphs">SubtractiveLoft</text>
<text x="65" y="291.9" textLength="44.5" lengthAdjust="spacingAndGlyphs">Pocket003</text>
<text x="65" y="305.2" textLength="44.5" lengthAdjust="spacingAndGlyphs">Pocket004</text>
<text x="79.6" y="318.5" textLength="45.4" lengthAdjust="spacingAndGlyphs">Sketch009</text>
<text x="79.6" y="345" textLength="45.4" lengthAdjust="spacingAndGlyphs">Sketch010</text>
</g>
<text x="65" y="331.7" fill="#111" textLength="45" lengthAdjust="spacingAndGlyphs">Pocket005</text>
<text x="50.4" y="358.6" fill="#111" textLength="20.5" lengthAdjust="spacingAndGlyphs">Page</text>
</g>
<!-- expand arrows -->
<g fill="#4a4a4a">
<path d="M7.3 155.8h5l-2.5 2.6z"/>
<path d="M21.3 169h5l-2.5 2.6z"/>
<path d="M37.2 300.6h5l-2.5 2.6z"/>
<path d="M37.2 327h5l-2.5 2.6z"/>
<path d="M37.8 180.7l2.8 2.6-2.8 2.6z"/>
<path d="M37.8 193.8l2.8 2.6-2.8 2.6z"/>
<path d="M37.8 207l2.8 2.6-2.8 2.6z"/>
<path d="M37.8 220.1l2.8 2.6-2.8 2.6z"/>
<path d="M37.8 233.2l2.8 2.6-2.8 2.6z"/>
<path d="M37.8 246.4l2.8 2.6-2.8 2.6z"/>
<path d="M37.8 259.5l2.8 2.6-2.8 2.6z"/>
<path d="M37.8 272.8l2.8 2.6-2.8 2.6z"/>
<path d="M37.8 286.1l2.8 2.6-2.8 2.6z"/>
<path d="M23 352.8l2.8 2.6-2.8 2.6z"/>
</g>
<!-- tree icons -->
<defs>
<g id="icPad"><path d="M0.500 6.800l4-1.600 6 1.400-4 2.400z" fill="#fff" stroke="#4a4a4a" stroke-width=".9"/><path d="M0.800 1.800l4-1.500 5.500 1.200v3.800l-4 1.700-5.500-1.400z" fill="#7c7c7c" stroke="#5a5a5a" stroke-width=".5"/><path d="M0.800 1.800l4-1.500 5.500 1.200-4 1.600z" fill="#a4a4a4"/><path d="M1 3.300l5.300 1.300 4-1.600" fill="none" stroke="#5a5a5a" stroke-width=".4"/></g>
<g id="icPocket"><path d="M0.500 4.500l6-4 5 1.200v3.800l-6 3.800-5-1.400z" fill="#8a8a8a" stroke="#6a6a6a" stroke-width=".5"/><path d="M0.500 4.500l6-4 5 1.200-6 4z" fill="#a8a8a8"/><path d="M3.500 3.800l3-2 2.500 .6-3 2z" fill="#6e6e6e"/><path d="M5.500 5.700v3.600" stroke="#6a6a6a" stroke-width=".5"/></g>
<g id="icSketch" fill="none" stroke="#7a7a7a" stroke-width="1.200"><circle cx="7.500" cy="4.300" r="3.600" fill="#fff"/><path d="M0.800 5h6.800v6h-6.800z" fill="#fff"/><path d="M4 5a3.600 3.600 0 0 0 3.600 3" stroke-width=".8"/></g>
</defs>
<!-- document icon -->
<rect x="20.300" y="151.700" width="9.200" height="9.800" fill="#e9e9e9" stroke="#bdbdbd" stroke-width=".7"/>
<path d="M21.500 155.800l2.800-1.300 3 .8v3.800l-2.800 1.500-3-1z" fill="#3d72b4" stroke="#1f4a87" stroke-width=".5"/>
<path d="M21.500 155.800l3 .9 2.800-1.400" fill="none" stroke="#7aa6e0" stroke-width=".5"/>
<circle cx="26.800" cy="153.700" r="2" fill="#e01818"/>
<!-- body icon -->
<g transform="translate(35,164.800)">
<path d="M0.500 2.500l3.200-1.800 2.400 .8v2.300l2.800 .9v3.300l-3.700 1.700-4.700-1.700z" fill="#4a7ec0" stroke="#24508e" stroke-width=".6"/>
<path d="M0.500 2.500l3.200-1.800 2.400 .8-3 1.800zM3.100 6l3-1.800 2.800 .9-3.700 1.900z" fill="#86b0e4"/>
<path d="M5.200 7l3.700-1.900v3.300l-3.700 1.700z" fill="#2f62a8"/>
</g>
<!-- origin -->
<path d="M54.300 177.800v5.200l5.400 .8M54.300 183l-3.800 3.800" fill="none" stroke="#555" stroke-width="1.100"/>
<!-- pads -->
<use href="#icPad" x="49" y="190.800"/><use href="#icPad" x="49" y="204"/><use href="#icPad" x="49" y="230.300"/>
<!-- pockets -->
<use href="#icPocket" x="48.500" y="218.200"/><use href="#icPocket" x="48.500" y="244.500"/><use href="#icPocket" x="48.500" y="257.600"/><use href="#icPocket" x="48.500" y="284.200"/><use href="#icPocket" x="48.500" y="297.500"/>
<!-- subtractive loft -->
<path d="M49.500 275l3.500-3.700 6.300 .5v7l-9.800 .5z" fill="#7a7a7a"/><path d="M53 271.300l6.300 .5v7" fill="none" stroke="#5e5e5e" stroke-width=".6"/><path d="M49.500 275l3.500-3.700v7.800" fill="#9a9a9a"/><path d="M53 271.300v7.700" stroke="#5e5e5e" stroke-width=".5"/>
<!-- sketches -->
<use href="#icSketch" x="63" y="308"/><use href="#icSketch" x="63" y="334.500"/>
<!-- pocket005 (active) -->
<g transform="translate(48.600,322)">
<path d="M0.500 4.500l5.500-3.700 5.500 1.200v4l-5.500 3.800-5.500-1.500z" fill="#3d6cb0" stroke="#1f3f78" stroke-width=".6"/>
<path d="M0.500 4.500l5.500-3.700 5.500 1.200-5.500 4z" fill="#7a9fd8"/>
<path d="M3.500 3.600l3-2 3 .7-3 2.100z" fill="#c01818"/>
<circle cx="8.700" cy="8" r="3.100" fill="#2ad02a"/><path d="M8.700 5.800v3M7.300 7.800l1.400 1.700 1.400-1.700" fill="none" stroke="#fff" stroke-width="1"/>
</g>
<!-- page icon -->
<path d="M35.500 349.500h8v11h-8z" fill="#f4f4f2" stroke="#8a8a8a" stroke-width=".8"/>
<path d="M37 353h4M37 355h5M37 357h5" stroke="#d4d4d4" stroke-width=".6"/>
<circle cx="43" cy="351.800" r="2.900" fill="#1818e8"/><path d="M41.600 351.800l1.100 1.200 1.800-2.300" fill="none" stroke="#fff" stroke-width=".9"/>
<g fill="#c2c2c2"><rect x="268" y="306" width="1" height="1"/><rect x="268" y="309" width="1" height="1"/><rect x="268" y="312" width="1" height="1"/><rect x="268" y="315" width="1" height="1"/><rect x="268" y="318" width="1" height="1"/><rect x="268" y="321" width="1" height="1"/><rect x="268" y="324" width="1" height="1"/></g>
<rect x="271" y="90" width="529" height="359" fill="url(#bgv)"/>
<defs>
<linearGradient id="cylG" x1="352" y1="0" x2="576" y2="0" gradientUnits="userSpaceOnUse">
<stop offset="0" stop-color="#34343a"/><stop offset="0.015" stop-color="#3e3e44"/><stop offset="0.036" stop-color="#5c5c63"/><stop offset="0.07" stop-color="#7e7e82"/><stop offset="0.147" stop-color="#9a9a9c"/><stop offset="0.214" stop-color="#acacae"/><stop offset="0.348" stop-color="#c2c2c2"/><stop offset="0.48" stop-color="#c9c9c9"/><stop offset="0.58" stop-color="#c6c6c6"/><stop offset="0.66" stop-color="#bcbcbc"/><stop offset="0.75" stop-color="#aaaaaa"/><stop offset="0.84" stop-color="#8e8e8e"/><stop offset="0.906" stop-color="#6e6e6e"/><stop offset="0.932" stop-color="#5c5c5c"/><stop offset="0.94" stop-color="#6c6c72"/><stop offset="0.973" stop-color="#58585e"/><stop offset="1" stop-color="#424248"/></linearGradient>
<linearGradient id="innG" x1="370" y1="0" x2="562" y2="0" gradientUnits="userSpaceOnUse">
<stop offset="0" stop-color="#4e4e54"/><stop offset="0.1" stop-color="#74747a"/><stop offset="0.26" stop-color="#9a9a9f"/><stop offset="0.47" stop-color="#b2b2b6"/><stop offset="0.68" stop-color="#acacb0"/><stop offset="0.885" stop-color="#8c8c92"/><stop offset="1" stop-color="#5e5e64"/></linearGradient>
<linearGradient id="coneG" x1="371" y1="0" x2="557" y2="0" gradientUnits="userSpaceOnUse"><stop offset="0" stop-color="#2e2e34" stop-opacity=".34"/><stop offset=".35" stop-color="#2e2e34" stop-opacity=".2"/><stop offset=".7" stop-color="#2e2e34" stop-opacity=".07"/><stop offset="1" stop-color="#2e2e34" stop-opacity=".12"/></linearGradient>
<linearGradient id="blG" x1="353" y1="0" x2="388" y2="0" gradientUnits="userSpaceOnUse"><stop offset="0" stop-color="#fff" stop-opacity=".3"/><stop offset="1" stop-color="#fff" stop-opacity="0"/></linearGradient>
<linearGradient id="botG" x1="0" y1="340" x2="0" y2="398" gradientUnits="userSpaceOnUse"><stop offset="0" stop-color="#000" stop-opacity="0"/><stop offset="1" stop-color="#000" stop-opacity="0.040"/></linearGradient>
<linearGradient id="frontG" x1="0" y1="270" x2="0" y2="350" gradientUnits="userSpaceOnUse"><stop offset="0" stop-color="#a8a8ac"/><stop offset=".6" stop-color="#a2a2a6"/><stop offset="1" stop-color="#96969a"/></linearGradient>
</defs>
<g stroke-linejoin="round" stroke="#1e1e22" stroke-width="1.100">
<!-- L block: tall part -->
<path d="M574 249.800L684.200 274.750 658 286.750 574 268Z" fill="#6e6e72"/>
<path d="M574 268L658 286.750V350L601.400 338 574 346Z" fill="url(#frontG)"/>
<!-- right face (whole L) -->
<path d="M658 286.750L684.200 274.750V368.300L610.400 404.500V372.800L656 350.100Z" fill="#6c6c72"/>
<path d="M658 286.750L684.200 274.750V337.600L656 350.100Z" fill="#7e7e84" stroke="none"/>
<path d="M656 350.100L684.200 337.600V368.300L636 358.500 610.400 372.800Z" fill="#8a8a8e" stroke="none"/>
<path d="M656 350.100L684.200 337.600" stroke="#2a2a30" stroke-width=".9" fill="none"/>
<path d="M636 358.500L684.200 368.300" stroke="#55555c" stroke-width=".6" fill="none"/>
<path d="M658 286.750L684.200 274.750V368.300L610.400 404.500V372.800L656 350.100Z" fill="none"/>
<!-- lower top -->
<path d="M573 344L602 337.500 556 362 545 372Z" fill="#808086" stroke="none"/>
<path d="M601.400 338L656 350.100 610.400 372.800 556.300 361.500Z" fill="#55555b"/>
<path d="M601.400 338L656 350.100 640 358.500 585 346.500Z" fill="#74747a" stroke="none"/>
<path d="M585 346.500L640 358.500" stroke="#4a4a52" stroke-width=".6" fill="none"/>
<path d="M601.400 338L656 350.100 610.400 372.800 556.300 361.500Z" fill="none"/>
<!-- lower front -->
<path d="M556.300 361.500L610.400 372.800V404.500L538.300 388.100V376.500Z" fill="#8e8e92"/>
</g>
<!-- cylinder body -->
<path id="cylBody" d="M356 180L353.800 300 352.800 348C353 363 361 375 380 384.500 402 393.500 430 397.500 458 397.300 490 397 518 393 538.800 387L538.800 377 556.500 360 574 345 575 183C575 200 520 217.800 465 217.800 410 217.800 356 200 356 180Z" fill="url(#cylG)" stroke="#26262b" stroke-width="1.100"/>
<clipPath id="bodyClip"><path d="M356 180L353.800 300 352.800 348C353 363 361 375 380 384.500 402 393.500 430 397.500 458 397.300 490 397 518 393 538.800 387L538.800 377 556.500 360 574 345 575 183C575 200 520 217.800 465 217.800 410 217.800 356 200 356 180Z"/></clipPath>
<g clip-path="url(#bodyClip)" fill="none">
<path d="M352 346C358 343 366 341 376 340L392 339 392 392 352 392Z" fill="url(#blG)"/>
<path d="M352.800 348C353 363 361 375 380 384.500 402 393.500 430 397.500 458 397.300 490 397 518 393 538.800 387" stroke="#e4e4e8" stroke-opacity=".38" stroke-width="11" transform="translate(0,-8.500)"/>
<path d="M352.800 348C353 363 361 375 380 384.500 402 393.500 430 397.500 458 397.300 490 397 518 393 538.800 387" stroke="#44444a" stroke-opacity=".3" stroke-width="4" transform="translate(0,-2)"/>
<path d="M352.800 348C353 363 361 375 380 384.500 402 393.500 430 397.500 458 397.300 490 397 518 393 538.800 387" stroke="#5a5a60" stroke-opacity=".6" stroke-width=".8" transform="translate(0,-4)"/>
<path d="M352.800 348C353 363 361 375 380 384.500 402 393.500 430 397.500 458 397.300 490 397 518 393 538.800 387" stroke="#5a5a60" stroke-opacity=".5" stroke-width=".8" transform="translate(0,-14)"/>
</g>
<path d="M561.500 262L575 250v96l-13.500 10z" fill="#b0b0b4" opacity=".42"/>
<path d="M548 262.500L574 268" stroke="#66666c" stroke-width=".6" opacity=".5" fill="none"/>
<!-- inner wall visible through opening -->
<ellipse cx="465.900" cy="181.200" rx="99" ry="33.500" fill="url(#innG)" transform="rotate(1.200 465 181)"/>
<!-- top annulus -->
<path d="M356.200 181.700a109.200 36 1 1 0 218.400 0a109.200 36 1 1 0-218.400 0zM370.200 181.200a95.700 31.700 1 1 1 191.400 0a95.700 31.700 1 1 1-191.400 0z" fill="#7a7a7c" fill-rule="evenodd" stroke="#222226" stroke-width="1.100" transform="rotate(1.200 465 181)"/>
<!-- interior details -->
<g fill="none">
<!-- seam lines -->
<path d="M373.500 162.500V300" stroke="#33333b" stroke-width=".8" opacity=".55"/>
<path d="M385 160V206.500" stroke="#1e1e22" stroke-width="1" opacity=".95"/>
<path d="M385 206V300" stroke="#55555f" stroke-width=".6" opacity=".4"/>
<!-- rings -->
<ellipse cx="464" cy="269" rx="96" ry="30" stroke="#6e6e74" stroke-width=".7" opacity=".5"/>
<ellipse cx="464" cy="272.500" rx="96" ry="29.500" stroke="#6e6e74" stroke-width=".7" opacity=".5"/>
<path d="M369 273a95 25.700 0 0 0 190 0" stroke="#55555a" stroke-width="1" opacity=".85"/>
<path d="M368.500 275.500a95.500 26.500 0 0 0 191 0" stroke="#66666c" stroke-width=".8" opacity=".7"/>
<path d="M369 273a95 25.700 0 0 1 190 0" stroke="#ececf2" stroke-width=".7" stroke-dasharray="4.500 2.500" opacity=".6"/>
<ellipse cx="460" cy="356.500" rx="95" ry="31.500" fill="#ffffff" fill-opacity=".1" stroke="#606066" stroke-width=".7" stroke-opacity=".5"/>
<path d="M354 337.500C362 330 378 325 396 323.400" stroke="#66666c" stroke-width=".7" opacity=".5"/>
<!-- cone -->
<path d="M371 281L411 350a49.400 16.200 0 0 0 98.800 0L557 283a95 25.700 0 0 1-186-2z" fill="url(#coneG)"/>
<path d="M373 285L411.500 349M556 287L509.500 349" stroke="#666670" stroke-width=".8" opacity=".75"/>
<path d="M398 296L420 338M531 300L500 338" stroke="#777782" stroke-width=".6" opacity=".5"/>
<ellipse cx="460" cy="351" rx="49.400" ry="16.200" fill="#dadada" fill-opacity=".3" stroke="#77777c" stroke-width=".7" stroke-opacity=".55"/>
<!-- floor ellipses -->
<path d="M354 300C357 294 366 290 376 289" stroke="#666670" stroke-width=".7" opacity=".6"/>
<path d="M353 322C360 316 372 312 386 310" stroke="#777782" stroke-width=".6" opacity=".45"/>
</g>
<!-- left tab -->
<g stroke-linejoin="round">
<path d="M336.800 311.500L353.900 303.500 353 346.800 336.800 343.400Z" fill="#9a9a9e" fill-opacity=".9" stroke="#222226" stroke-width="1"/>
<path d="M341.600 311C342.500 321 346.500 328 353.200 331" fill="none" stroke="#3a3a44" stroke-width=".8" opacity=".8"/>
<path d="M336.800 311.500L341.600 311C342.500 321 346.500 328 353.200 331L353 346.800 336.800 343.400Z" fill="#505056" opacity=".35"/>
</g>
<!-- pin through ring (behind) -->
<g>
<path d="M618 322.500L684 338" stroke="#777782" stroke-width=".6" opacity=".55" fill="none"/>
<path d="M592 321L609.500 313.700a7 7.500 0 0 1 4 13.800L597 336z" fill="#9e9ea4" fill-opacity=".85" stroke="#86868c" stroke-width=".6"/>
<ellipse cx="611.800" cy="320.800" rx="6.800" ry="7.600" fill="#acacb2" fill-opacity=".8" stroke="#8a8a90" stroke-width=".6" transform="rotate(-20 611.800 320.800)"/>
</g>
<!-- lever -->
<path d="M573 316.400C570 320 568 322.500 564.500 325 560 328.500 555 331.500 549.400 334.400 544 337 538 339.500 532.300 341 527 342.500 522 343.300 517.200 344.800 512 346.500 508 349 504 352.300 500 355.500 497 360 496 364 497 369 500 373 504 376 508 378.500 514 379.800 519 379.800 526 379.800 534 378.500 540 376 545.500 373.800 549.500 371 552.200 368.400 554 366 555 363.500 556.200 361.500L574 346 574 327Z" fill="#6c6c72" fill-opacity=".6" stroke="none"/>
<path d="M496 364L573 327.700 574 346 556.200 361.500C555 363.500 554 366 552.200 368.400 549.500 371 545.500 373.800 540 376 534 378.500 526 379.800 519 379.800 514 379.800 508 378.500 504 376 500 373 497 369 496 364Z" fill="#3c3c42" fill-opacity=".32"/>
<ellipse cx="547.500" cy="349.500" rx="11" ry="15" fill="#b0b0ba" opacity=".22" transform="rotate(20 547.500 349.500)"/>
<path d="M573 316.400C570 320 568 322.500 564.500 325 560 328.500 555 331.500 549.400 334.400 544 337 538 339.500 532.300 341 527 342.500 522 343.300 517.200 344.800 512 346.500 508 349 504 352.300 500 355.500 497 360 496 364 497 369 500 373 504 376 508 378.500 514 379.800 519 379.800 526 379.800 534 378.500 540 376 545.500 373.800 549.500 371 552.200 368.400 554 366 555 363.500 556.200 361.500" fill="none" stroke="#25252b" stroke-width="1.100" stroke-linejoin="round"/>
<path d="M496 364L573 327.700" stroke="#25252b" stroke-width="1.100" fill="none"/>
<g stroke="#92929e" stroke-width="1.100" opacity=".75"><path d="M509 365.500L526 358.500M512.500 369L533 360.500M517 372L539 363M522 375L544 366"/></g>
<!-- ring -->
<g transform="rotate(-25 587.400 330.700)">
<ellipse cx="590.500" cy="328.500" rx="13" ry="17" fill="#9c9ca2" fill-opacity=".6" stroke="#7c7c82" stroke-width=".6"/>
<ellipse cx="587.400" cy="330.700" rx="13" ry="17.500" fill="#a4a4aa" fill-opacity=".95" stroke="#222226" stroke-width="1"/>
</g>
<g transform="rotate(-25 590 331)">
<ellipse cx="590" cy="331" rx="7.600" ry="10" fill="#5e5e64" stroke="#222226" stroke-width="1"/>
<path d="M583 328a7.600 10 0 0 1 12.500-4.500l-8.500 15.500a7.600 10 0 0 1-4-11z" fill="#a0a0a6" opacity=".7"/>
</g>
<path d="M583 329.400L592.800 324" stroke="#2c2c33" stroke-width=".8" fill="none"/>
<!-- front hole & pin -->
<path d="M578 381.500L603 368.500 604.500 372 580.500 388.500z" fill="#c2c2cc" fill-opacity=".4" stroke="#9a9aa6" stroke-width=".5"/>
<ellipse cx="603.500" cy="370.500" rx="3.200" ry="3.600" fill="none" stroke="#8a8a96" stroke-width=".7" opacity=".8"/>
<circle cx="578" cy="385" r="4.200" fill="#77777c" stroke="#222226" stroke-width="1"/>
<!-- nav cube -->
<g fill="#c4c4da" fill-opacity=".62">
<path d="M716.900 106.200l7.800 8h-15.600z"/>
<path d="M717 202.300l7.900-7.600h-15.600z"/>
<path d="M669.400 154.300l8-8v15.600z"/>
<path d="M765.600 154.300l-8.900-8v15.600z"/>
<circle cx="760.700" cy="110.200" r="4.400"/>
<path id="navArr" d="M704.700 116.200A40 40 0 0 0 689.200 126.800L691.500 128.800 681 131.500 682.400 119.400 685.200 122.200A45.300 45.300 0 0 1 703 110.900Z"/>
<use href="#navArr" transform="translate(1434,0) scale(-1,1)"/>
</g>
<!-- cube silhouette + faces -->
<g stroke-linejoin="round">
<path d="M691.600 138.400L697.800 134.300 713.900 132.100 725.400 133.400 741.500 139.300 742.400 142.800 741.500 167.800 733.500 175.800 723.700 182.400 718.300 181.700 694.300 173.100 692.100 170.400Z" fill="#bdbdcc" stroke="#33333b" stroke-width=".9"/>
<path d="M692 140L720.100 146 718.900 180.600 694.300 173.100 692.100 170.400Z" fill="#c5c5d3" stroke="#3a3a44" stroke-width=".7"/>
<path d="M693.400 136.600L697.800 134.300 713.900 132.100 725.400 133.400 739.700 138.300 729 144.600 723.100 137.800 721 142.800Z" fill="#cdcdd9" stroke="#44444e" stroke-width=".6"/>
<path d="M727.200 146.400L741.800 140.800 741.500 167.800 733.500 175.800 726.700 180Z" fill="#b6b6c6" stroke="#44444e" stroke-width=".6"/>
<path d="M721 142.800L723.100 137.800 729 144.600 727.200 146.400 720.100 146Z" fill="#c0c0ce" stroke="#33333b" stroke-width=".7"/>
</g>
<g transform="translate(696.800,163) rotate(6)"><text x="0" y="0" font-size="11" font-weight="bold" fill="#2a2a32" textLength="16.500" lengthAdjust="spacingAndGlyphs">REAR</text></g>
<g transform="translate(734.200,164) rotate(-63)"><text x="0" y="0" font-size="6.500" font-weight="bold" fill="#777786" textLength="11" lengthAdjust="spacingAndGlyphs">LEFT</text></g>
<!-- axes -->
<path d="M720 164.200L737 168.700" stroke="#f08a8a" stroke-width=".7" fill="none"/>
<path d="M742 171L730.800 184.700" stroke="#18c018" stroke-width="1.600" fill="none"/>
<path d="M742.700 169.500L746 144.200" stroke="#1010f0" stroke-width="1.900" fill="none"/>
<path d="M736.800 168.500L742.500 170.500" stroke="#e01010" stroke-width="2" fill="none"/>
<!-- mini cube -->
<path d="M734 188.300l7.300-3.100 7.300 2.400v8.400l-7.200 3-7.400-2.600z" fill="#8a8aa6"/>
<path d="M734 188.300l7.300-3.100 7.300 2.400-7.200 3z" fill="#9c9cb8"/>
<path d="M741.400 190.600l7.200-3v8.400l-7.200 3z" fill="#7c7c9a"/>
<path d="M751.300 190h8.700l-4.300 4.200z" fill="#3a3a5e"/>

</svg>
</body></html>
